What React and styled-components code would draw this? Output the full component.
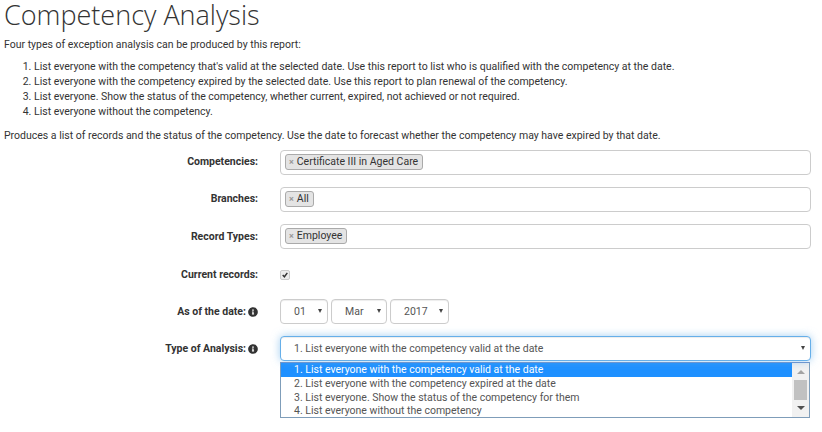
import React from "react";
import styled, { createGlobalStyle } from "styled-components";
import { FaInfoCircle } from "react-icons/fa";

const GlobalStyle = createGlobalStyle`
  html, body {
    margin: 0;
    padding: 0;
    background: #fff;
    overflow: hidden;
  }
  body {
    font-family: Roboto, "Liberation Sans", sans-serif;
    font-size: 10.5px;
    color: #333;
  }
`;

const Page = styled.div`
  width: 822px;
  height: 432px;
  padding: 0 10px 0 4px;
  box-sizing: border-box;
  overflow: hidden;
`;

const Title = styled.h1`
  margin: 0;
  height: 37px;
  font-family: "Open Sans", sans-serif;
  font-weight: 300;
  font-size: 27px;
  line-height: 30px;
  color: #333;
`;

const Para = styled.p`
  margin: 0;
  line-height: 15px;
`;

const Steps = styled.ol`
  margin: 7px 0 9px;
  padding: 0 0 0 30px;
  line-height: 15px;
`;

const Form = styled.div`
  display: flex;
  flex-direction: column;
  margin-top: 7px;
`;

const Row = styled.div`
  display: grid;
  grid-template-columns: 254px 531px;
  column-gap: 22px;
  align-items: ${(p) => (p.$top ? "start" : "center")};
  margin-bottom: ${(p) => p.$gap ?? 12}px;
`;

const Label = styled.label`
  display: flex;
  justify-content: flex-end;
  align-items: center;
  gap: 2px;
  font-weight: 700;
  line-height: 15px;
  padding-top: ${(p) => p.$pad ?? 0}px;
  padding-bottom: ${(p) => p.$lift ?? 0}px;
`;

const TagBox = styled.div`
  height: 25px;
  box-sizing: border-box;
  border: 1px solid #ccc;
  border-radius: 4px;
  background: #fff;
  padding: 3px 4px;
  display: flex;
  align-items: flex-start;
`;

const Tag = styled.span`
  display: inline-flex;
  align-items: center;
  height: 16px;
  box-sizing: border-box;
  padding: 0 4px 0 3px;
  border: 1px solid #aaa;
  border-radius: 3px;
  background: #e4e4e4;
  line-height: 14px;
  color: #333;
`;

const TagClose = styled.span`
  color: #999;
  font-weight: 700;
  font-size: 9px;
  margin-right: 3px;
`;

const CheckBox = styled.span`
  display: inline-flex;
  align-items: center;
  justify-content: center;
  width: 6px;
  height: 6px;
  padding: 1px;
  border: 1px solid #ccc;
  border-radius: 2px;
  background: #ededed;
`;

const CheckCell = styled.div`
  display: flex;
  align-items: center;
  height: 15px;
`;

const DateRow = styled.div`
  display: flex;
  gap: 3px;
`;

const SelectBox = styled.div`
  position: relative;
  height: 25px;
  box-sizing: border-box;
  width: ${(p) => p.$w || "100%"};
  border: 1px solid ${(p) => (p.$focus ? "#66afe9" : "#ccc")};
  border-radius: 4px;
  background: #fff;
  color: #555;
  line-height: 23px;
  padding-left: 13px;
  box-shadow: ${(p) =>
    p.$focus
      ? "inset 0 1px 1px rgba(0,0,0,.075), 0 0 8px rgba(102,175,233,.6)"
      : "inset 0 1px 1px rgba(0,0,0,.075)"};
`;

const Caret = styled.span`
  position: absolute;
  right: 5px;
  top: 9px;
  width: 0;
  height: 0;
  border-left: 2.5px solid transparent;
  border-right: 2.5px solid transparent;
  border-top: 4px solid #444;
`;

const Cell = styled.div`
  display: flex;
  flex-direction: column;
`;

const ListBox = styled.div`
  margin: 1px 1px 0 0;
  height: 56px;
  box-sizing: border-box;
  border: 1px solid #7f9db9;
  border-top-color: #6d8fc9;
  display: flex;
  background: #fff;
  overflow: hidden;
`;

const Options = styled.div`
  flex: 1;
  min-width: 0;
`;

const Option = styled.div`
  height: ${(p) => p.$h}px;
  line-height: ${(p) => p.$h}px;
  padding-left: 13px;
  color: ${(p) => (p.$active ? "#fff" : "#555")};
  background: ${(p) => (p.$active ? "#1e90ff" : "transparent")};
`;

const Scrollbar = styled.div`
  width: 17px;
  background: #f1f1f1;
  display: flex;
  flex-direction: column;
  align-items: center;
`;

const ScrollArrow = styled.span`
  flex: none;
  width: 0;
  height: 0;
  margin: ${(p) => (p.$up ? "7px 0 6px" : "6px 0 0")};
  border-left: 4px solid transparent;
  border-right: 4px solid transparent;
  ${(p) => (p.$up ? "border-bottom: 4px solid #a3a3a3;" : "border-top: 4px solid #505050;")}
`;

const ScrollThumb = styled.span`
  flex: none;
  width: 13px;
  height: 20px;
  background: #c1c1c1;
`;

const InfoIcon = styled(FaInfoCircle)`
  width: 10px;
  height: 10px;
  color: #333;
`;

const tags = [
  ["Competencies:", "Certificate III in Aged Care"],
  ["Branches:", "All"],
  ["Record Types:", "Employee"],
];

const dates = [
  ["01", "48px"],
  ["Mar", "56px"],
  ["2017", "59px"],
];

const analysis = [
  "1. List everyone with the competency valid at the date",
  "2. List everyone with the competency expired at the date",
  "3. List everyone. Show the status of the competency for them",
  "4. List everyone without the competency",
];

const optionHeights = [14, 14, 14, 12];

export default function App() {
  return (
    <Page>
      <GlobalStyle />
      <Title>Competency Analysis</Title>
      <Para>Four types of exception analysis can be produced by this report:</Para>
      <Steps>
        <li>List everyone with the competency that's valid at the selected date. Use this report to list who is qualified with the competency at the date.</li>
        <li>List everyone with the competency expired by the selected date. Use this report to plan renewal of the competency.</li>
        <li>List everyone. Show the status of the competency, whether current, expired, not achieved or not required.</li>
        <li>List everyone without the competency.</li>
      </Steps>
      <Para>Produces a list of records and the status of the competency. Use the date to forecast whether the competency may have expired by that date.</Para>
      <Form>
        {tags.map(([label, tag], i) => (
          <Row key={label} $gap={i === 2 ? 18 : 12}>
            <Label $lift={i === 2 ? 0 : 2}>{label}</Label>
            <TagBox>
              <Tag>
                <TagClose>×</TagClose>
                {tag}
              </Tag>
            </TagBox>
          </Row>
        ))}
        <Row $gap={16}>
          <Label $lift={1}>Current records:</Label>
          <CheckCell>
            <CheckBox>
              <svg width="6" height="6" viewBox="0 0 7 7">
                <path d="M0.8 3.6 L2.8 5.6 L6.2 1" fill="none" stroke="#333" strokeWidth="1.7" />
              </svg>
            </CheckBox>
          </CheckCell>
        </Row>
        <Row $gap={12}>
          <Label>
            As of the date: <InfoIcon />
          </Label>
          <DateRow>
            {dates.map(([value, w]) => (
              <SelectBox key={value} $w={w}>
                {value}
                <Caret />
              </SelectBox>
            ))}
          </DateRow>
        </Row>
        <Row $top $gap={0}>
          <Label $pad={5}>
            Type of Analysis: <InfoIcon />
          </Label>
          <Cell>
            <SelectBox $focus>
              {analysis[0]}
              <Caret />
            </SelectBox>
            <ListBox>
              <Options>
                {analysis.map((text, i) => (
                  <Option key={text} $active={i === 0} $h={optionHeights[i]}>
                    {text}
                  </Option>
                ))}
              </Options>
              <Scrollbar>
                <ScrollArrow $up />
                <ScrollThumb />
                <ScrollArrow />
              </Scrollbar>
            </ListBox>
          </Cell>
        </Row>
      </Form>
    </Page>
  );
}
